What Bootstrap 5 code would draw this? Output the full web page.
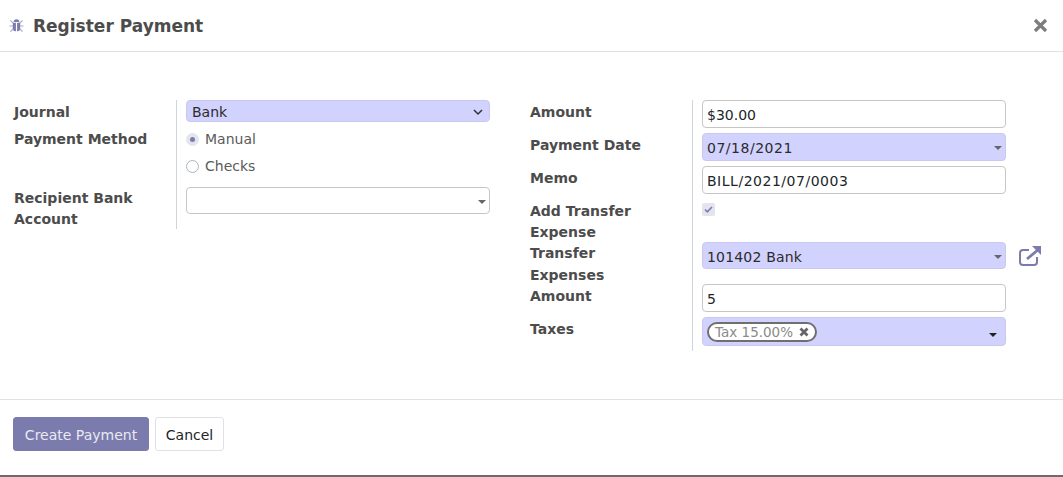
<!DOCTYPE html>
<html lang="en">
<head>
  <meta charset="UTF-8">
  <title>Register Payment</title>
  <meta name="viewport" content="width=device-width, initial-scale=1">
  <link href="https://cdn.jsdelivr.net/npm/bootstrap@5.3.3/dist/css/bootstrap.min.css" rel="stylesheet">
  <style>
    html, body {
      height: 100%;
    }

    body {
      font-family: "DejaVu Sans", Verdana, sans-serif;
      font-size: 14px;
      color: #4c4c4c;
      background: #fff;
      overflow: hidden;
    }

    .pay-dialog {
      height: 477px;
      border-bottom: 2px solid #6c6c6c;
    }

    .pay-head {
      height: 52px;
      padding: 0 15px 0 9px;
      border-bottom: 1px solid #dee2e6;
    }

    .pay-title {
      font-size: 17px;
      font-weight: 700;
      color: #4c4c4c;
      margin: 2px 0 0 9px;
    }

    .pay-close {
      color: #7d7d7d;
      line-height: 0;
    }

    .pay-body {
      height: 347px;
      padding: 48px 14px 0;
    }

    .pay-group {
      display: grid;
      grid-template-columns: 162px 1fr;
    }

    .pay-left {
      width: 476px;
      margin-right: 40px;
    }

    .pay-right {
      width: 476px;
    }

    .pay-label {
      font-weight: 700;
      line-height: 21px;
      padding-right: 20px;
    }

    .pay-line {
      line-height: 22px;
    }

    .pay-fields {
      border-left: 1px solid #ced4da;
      padding-left: 9px;
      width: 314px;
    }

    .pay-left .pay-fields {
      height: 129px;
    }

    .pay-right .pay-fields {
      height: 251px;
    }

    .pay-labels {
      display: flex;
      flex-direction: column;
    }

    .pay-input {
      height: 28px;
      width: 304px;
      border: 1px solid #c6c6c6;
      border-radius: 4px;
      padding: 0 4px;
      line-height: 28px;
      color: #212529;
      position: relative;
    }

    .pay-wide {
      letter-spacing: .52px;
    }

    .pay-req {
      background: #d2d2ff;
      border-color: #c9c9ee;
      color: #2b2b2b;
    }

    .pay-caret {
      position: absolute;
      right: 3px;
      top: 12px;
      width: 0;
      height: 0;
      border-left: 4px solid transparent;
      border-right: 4px solid transparent;
      border-top: 4px solid #666;
    }

    .pay-radio {
      height: 27px;
      color: #5a5a5a;
      gap: 6px;
    }

    .pay-dot {
      width: 13px;
      height: 13px;
      border-radius: 50%;
      border: 1px solid #adb5bd;
      background: #fff;
    }

    .pay-dot-on {
      border: 0;
      background: #e4e4ee;
      position: relative;
    }

    .pay-dot-on::after {
      content: "";
      position: absolute;
      left: 4px;
      top: 4px;
      width: 5px;
      height: 5px;
      border-radius: 50%;
      background: #7c7bad;
    }

    .pay-check {
      width: 13px;
      height: 13px;
      border-radius: 2px;
      background: #e4e4ee;
    }

    .pay-tag {
      height: 20px;
      border: 2px solid #6f6f6f;
      border-radius: 10px;
      padding: 0 6px;
      background: #fff;
      color: #8a8a8a;
      font-size: 13.500px;
      line-height: 16px;
      gap: 6px;
    }

    .pay-link {
      position: absolute;
      left: 316px;
      top: 3px;
      line-height: 0;
    }

    .pay-foot {
      border-top: 1px solid #dee2e6;
      padding: 17px 13px 0;
      gap: 6px;
    }

    .pay-btn {
      font-size: 14px;
      height: 34px;
      padding: 2px 10px 0;
      border-radius: 3px;
    }

    .pay-primary,
    .pay-primary:hover {
      width: 136px;
      padding-left: 0;
      padding-right: 0;
      background: #7c7bad;
      border: 1px solid #7c7bad;
      color: #e9e9f2;
    }

    .pay-cancel,
    .pay-cancel:hover {
      width: 69px;
      padding-left: 0;
      padding-right: 0;
      background: #fff;
      border: 1px solid #dee2e6;
      color: #212529;
    }
  </style>
</head>
<body>

  <div class="pay-dialog d-flex flex-column">
    <div class="pay-head d-flex align-items-center justify-content-between">
      <div class="d-flex align-items-center">
        <!-- bug icon -->
        <svg width="15" height="15" viewBox="0 0 16 16" fill="#7c7bad">
          <path d="M5 4.200a3 3 0 0 1 6 0z"/>
          <path d="M4 5h3.400v9H6.500A2.500 2.500 0 0 1 4 11.500zM8.600 5H12v6.500A2.500 2.500 0 0 1 9.500 14h-.9z"/>
          <path d="M1.500 2.500l3 3M14.500 2.500l-3 3M.5 8.500h3.500M15.500 8.500H12M1.500 14.500l3-3M14.500 14.500l-3-3" stroke="#a9a8cc" stroke-width="1.200"/>
        </svg>
        <h5 class="pay-title">Register Payment</h5>
      </div>
      <span class="pay-close">
        <svg width="15" height="15" viewBox="0 0 15 15"><path d="M2 2l11 11M13 2L2 13" stroke="#7d7d7d" stroke-width="3.200"/></svg>
      </span>
    </div>

    <div class="pay-body d-flex">
      <div class="pay-group pay-left">
        <div class="pay-labels">
          <div class="pay-label" style="margin-top:2px">Journal</div>
          <div class="pay-label" style="margin-top:6px">Payment Method</div>
          <div class="pay-label" style="margin-top:38px">Recipient Bank Account</div>
        </div>
        <div class="pay-fields">
          <div class="pay-input pay-req" style="height:22px;line-height:22px;padding-left:5px">
            Bank
            <svg class="position-absolute" style="right:6px;top:8px" width="10" height="7" viewBox="0 0 10 7"><path d="M1 1l4 4 4-4" fill="none" stroke="#333" stroke-width="1.500"/></svg>
          </div>
          <div class="pay-radio d-flex align-items-center" style="margin-top:4px"><span class="pay-dot pay-dot-on"></span>Manual</div>
          <div class="pay-radio d-flex align-items-center"><span class="pay-dot"></span>Checks</div>
          <div class="pay-input" style="height:27px;margin-top:7px"><span class="pay-caret" style="top:12px"></span></div>
        </div>
      </div>

      <div class="pay-group pay-right">
        <div class="pay-labels">
          <div class="pay-label" style="margin-top:2px">Amount</div>
          <div class="pay-label" style="margin-top:12px">Payment Date</div>
          <div class="pay-label" style="margin-top:12px">Memo</div>
          <div class="pay-label" style="margin-top:12px">Add Transfer Expense</div>
          <div class="pay-label pay-line" style="margin-top:-1px">Transfer Expenses</div>
          <div class="pay-label">Amount</div>
          <div class="pay-label" style="margin-top:12px">Taxes</div>
        </div>
        <div class="pay-fields">
          <div class="pay-input">$30.00</div>
          <div class="pay-input pay-req pay-wide" style="margin-top:5px">07/18/2021<span class="pay-caret"></span></div>
          <div class="pay-input pay-wide" style="margin-top:5px">BILL/2021/07/0003</div>
          <div class="pay-check d-flex align-items-center justify-content-center" style="margin-top:9px">
            <svg width="9" height="7" viewBox="0 0 9 7"><path d="M1 3.500l2.300 2.300L8 1" fill="none" stroke="#7c7bad" stroke-width="1.600"/></svg>
          </div>
          <div class="pay-input pay-req" style="height:27px;margin-top:26px;letter-spacing:.18px">101402 Bank<span class="pay-caret"></span>
            <span class="pay-link">
              <svg width="23" height="20" viewBox="0 0 23 20" fill="none" stroke="#7c7bad" stroke-width="2">
                <path d="M10 4H4a3 3 0 0 0-3 3v9a3 3 0 0 0 3 3h11a3 3 0 0 0 3-3v-5"/>
                <path d="M8 13L20 3" stroke-width="2.800"/>
                <path d="M13 0h9v9z" fill="#7c7bad" stroke="none"/>
              </svg>
            </span>
          </div>
          <div class="pay-input" style="margin-top:15px">5</div>
          <div class="pay-input pay-req d-flex align-items-center" style="height:29px;margin-top:5px">
            <span class="pay-tag d-inline-flex align-items-center">Tax 15.00%
              <svg width="10" height="10" viewBox="0 0 10 10"><path d="M1.500 1.500l7 7M8.500 1.500l-7 7" stroke="#666" stroke-width="2.800"/></svg>
            </span>
            <span class="pay-caret" style="top:15px;right:8px;border-top-color:#222"></span>
          </div>
        </div>
      </div>
    </div>

    <div class="pay-foot d-flex align-items-start flex-grow-1">
      <button type="button" class="btn pay-btn pay-primary">Create Payment</button>
      <button type="button" class="btn pay-btn pay-cancel">Cancel</button>
    </div>
  </div>

  <script src="https://cdn.jsdelivr.net/npm/bootstrap@5.3.3/dist/js/bootstrap.bundle.min.js"></script>
</body>
</html>
